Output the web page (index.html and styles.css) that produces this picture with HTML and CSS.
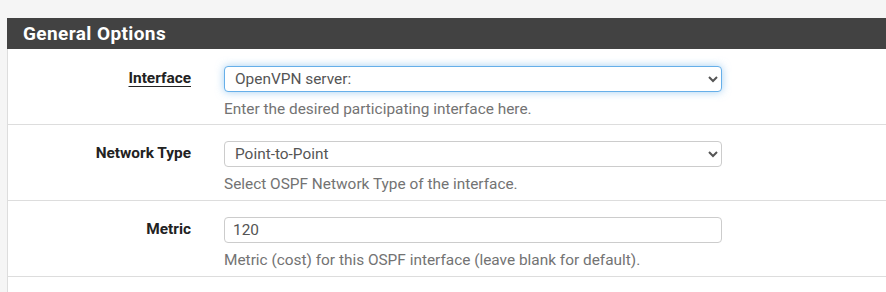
FILE: index.html
```html
<!DOCTYPE html>
<html lang="en">
<head>
    <meta charset="UTF-8">
    <title>General Options</title>
    <link rel="stylesheet" href="styles.css">
</head>
<body>
    <div class="panel">
        <h2 class="panel-heading">General Options</h2>
        <div class="panel-body">
            <div class="form-group">
                <label class="col-label" for="interface"><span class="abbr">Interface</span></label>
                <div class="col-control">
                    <select id="interface" class="form-control focused">
                        <option>OpenVPN server:</option>
                    </select>
                    <div class="help-block">Enter the desired participating interface here.</div>
                </div>
            </div>
            <div class="form-group">
                <label class="col-label" for="network_type">Network Type</label>
                <div class="col-control">
                    <select id="network_type" class="form-control">
                        <option>Point-to-Point</option>
                    </select>
                    <div class="help-block">Select OSPF Network Type of the interface.</div>
                </div>
            </div>
            <div class="form-group">
                <label class="col-label" for="metric">Metric</label>
                <div class="col-control">
                    <input type="text" id="metric" class="form-control" value="120">
                    <div class="help-block">Metric (cost) for this OSPF interface (leave blank for default).</div>
                </div>
            </div>
        </div>
    </div>
</body>
</html>
```

FILE: styles.css
```css
body {
    margin: 0;
    padding: 18px 0 0 7px;
    background-color: #f5f5f5;
    font-family: Roboto, "Liberation Sans", sans-serif;
    font-size: 15.4px;
    color: #333;
    overflow: hidden;
}
.panel {
    background: #fff;
    border-left: 1px solid #ddd;
    height: 274px;
}
.panel-heading {
    margin: 0 0 0 -1px;
    height: 31px;
    line-height: 31px;
    padding: 0 16px;
    background-color: #424242;
    color: #fff;
    font-size: 19px;
    font-weight: bold;
    letter-spacing: 0.4px;
}
.form-group {
    display: flex;
    height: 59px;
    padding-top: 16px;
    border-bottom: 1px solid #ddd;
}
.form-group:first-child {
    padding-top: 17px;
    height: 58px;
}
.col-label {
    width: 183px;
    text-align: right;
    font-weight: bold;
    padding-top: 3px;
    color: #222;
}
.abbr {
    text-decoration: underline;
    text-underline-offset: 3px;
}
.col-control {
    margin-left: 33px;
    width: 498px;
}
.form-control {
    display: block;
    box-sizing: border-box;
    width: 100%;
    height: 26px;
    padding: 0 8px;
    border: 1px solid #ccc;
    border-radius: 4px;
    background-color: #fff;
    font-family: Roboto, "Liberation Sans", sans-serif;
    font-size: 15.4px;
    color: #555;
}
select.form-control {
    padding: 0 6px;
}
.form-control.focused {
    border-color: #66afe9;
    box-shadow: 0 0 8px rgba(102, 175, 233, 0.6);
}
.help-block {
    margin-top: 7px;
    line-height: 20px;
    color: #737373;
}
```
